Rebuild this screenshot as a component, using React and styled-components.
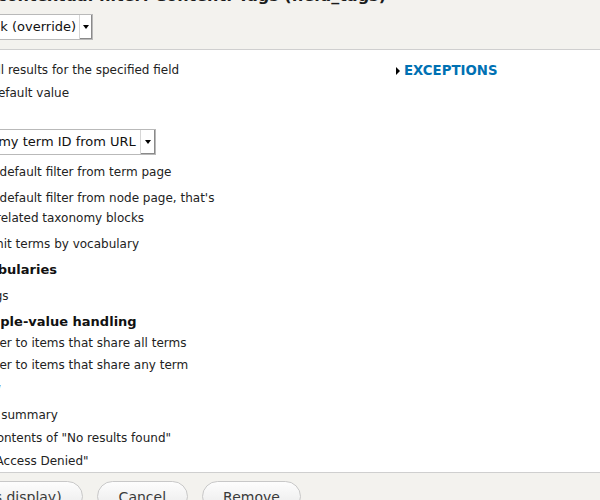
import React from "react";
import styled, { createGlobalStyle } from "styled-components";

const GlobalStyle = createGlobalStyle`
  html, body {
    margin: 0;
    padding: 0;
    background: #fff;
  }
  body {
    width: 600px;
    height: 500px;
    overflow: hidden;
    font-family: "DejaVu Sans", Verdana, sans-serif;
    font-size: 12px;
    color: #222;
  }
`;

const Dialog = styled.div`
  margin-left: -100px;
  width: 700px;
  display: flex;
  flex-direction: column;
`;

const Header = styled.div`
  height: 50px;
  box-sizing: border-box;
  background: #f3f2ee;
  border-bottom: 1px solid #cfcfcf;
  padding-left: 8px;
`;

const Title = styled.h1`
  margin: -14px 0 8px -4px;
  font-size: 16px;
  line-height: 20px;
  font-weight: bold;
  white-space: nowrap;
  color: #1c1c1c;
`;

const ForRow = styled.div`
  display: flex;
  align-items: center;
  gap: 6px;
`;

const InlineLabel = styled.label`
  font-size: 13px;
  font-weight: bold;
`;

const Select = styled.div`
  display: inline-flex;
  align-items: stretch;
  height: 26px;
  box-sizing: border-box;
  border: 1px solid #b9b9b9;
  background: #fff;
  font-size: 13px;
  color: #111;
`;

const SelectText = styled.span`
  padding: 0 ${(p) => p.$pr || 3}px 0 4px;
  line-height: 24px;
  white-space: nowrap;
`;

const SelectArrow = styled.span`
  width: ${(p) => p.$w || 12}px;
  border-left: 1px solid #d6d6d6;
  box-shadow: inset -1px -1px 0 #8a8a8a;
  display: flex;
  align-items: center;
  justify-content: center;

  &::after {
    content: "";
    border-left: 3px solid transparent;
    border-right: 3px solid transparent;
    border-top: 4px solid #000;
  }
`;

const Body = styled.div`
  height: 422px;
  box-sizing: border-box;
  overflow: hidden;
  padding: 9px 0 0 23px;
  display: grid;
  grid-template-columns: 305px 1fr;
  column-gap: 168px;
  align-items: start;
  background: #fff;
`;

const Column = styled.div`
  display: flex;
  flex-direction: column;
`;

const Sub = styled.div`
  margin-left: ${(p) => p.$indent}px;
  display: flex;
  flex-direction: column;
`;

const RadioRow = styled.div`
  line-height: ${(p) => p.$lh || 23}px;
  margin-top: ${(p) => p.$mt || 0}px;
`;

const CheckRow = styled.div`
  line-height: 20px;
  margin-top: ${(p) => (p.$mt === undefined ? 6 : p.$mt)}px;
  margin-left: ${(p) => -(p.$hang || 0)}px;
`;

const Radio = styled.span`
  display: inline-block;
  width: 13px;
  height: 13px;
  box-sizing: border-box;
  margin-right: 6px;
  vertical-align: -2px;
  border: 1px solid #8f8f8f;
  border-radius: 50%;
  background: ${(p) => (p.$on ? "radial-gradient(#333 3px, #fff 3.5px)" : "#fff")};
`;

const Check = styled.span`
  display: inline-block;
  width: 13px;
  height: 13px;
  box-sizing: border-box;
  margin-left: ${(p) => p.$hang || 0}px;
  margin-right: 6px;
  vertical-align: -2px;
  border: 1px solid #8f8f8f;
  border-radius: 2px;
  background: #fff;
`;

const FieldLabel = styled.div`
  font-size: 13px;
  font-weight: bold;
  line-height: 20px;
  margin: ${(p) => p.$m || "6px 0 0"};
  color: #111;
`;

const Toggle = styled.a`
  display: flex;
  align-items: center;
  gap: 4px;
  line-height: 23px;
  font-size: 13.3px;
  font-weight: bold;
  color: #0071b3;
  text-decoration: none;

  &::before {
    content: "";
    border-top: 4px solid transparent;
    border-bottom: 4px solid transparent;
    border-left: 4px solid #000;
  }
`;

const Footer = styled.div`
  height: 40px;
  box-sizing: border-box;
  border-top: 1px solid #cfcfcf;
  background: #f3f2ee;
  padding: 8px 0 0 5.5px;
  display: flex;
  gap: 14px;
`;

const Button = styled.button`
  font-family: "DejaVu Sans", Verdana, sans-serif;
  font-size: 14px;
  line-height: 16px;
  padding: 4px 20.5px;
  border: 1px solid #c8c8c8;
  border-radius: 20px;
  background: linear-gradient(#fdfdfd, #e9e9e9);
  color: #3a3a3a;
  white-space: nowrap;
`;

export default function App() {
  return (
    <>
      <GlobalStyle />
      <Dialog>
        <Header>
          <Title>Configure contextual filter: Content: Tags (field_tags)</Title>
          <ForRow>
            <InlineLabel>For</InlineLabel>
            <Select>
              <SelectText>This block (override)</SelectText>
              <SelectArrow />
            </Select>
          </ForRow>
        </Header>
        <Body>
          <Column>
            <RadioRow>
              <Radio />
              Display all results for the specified field
            </RadioRow>
            <RadioRow>
              <Radio $on />
              Provide default value
            </RadioRow>
            <Sub $indent={25}>
              <FieldLabel $m="3px 0 1px">Type</FieldLabel>
              <div>
                <Select>
                  <SelectText $pr={4}>Taxonomy term ID from URL</SelectText>
                  <SelectArrow $w={14} />
                </Select>
              </div>
              <CheckRow $mt={7}>
                <Check />
                Load default filter from term page
              </CheckRow>
              <CheckRow $hang={6}>
                <Check $hang={6} />
                Load default filter from node page, that's good for related taxonomy blocks
              </CheckRow>
              <Sub $indent={15}>
                <CheckRow>
                  <Check />
                  Limit terms by vocabulary
                </CheckRow>
                <FieldLabel>Vocabularies</FieldLabel>
                <CheckRow>
                  <Check />
                  Tags
                </CheckRow>
                <FieldLabel>Multiple-value handling</FieldLabel>
                <RadioRow $lh={22}>
                  <Radio $on />
                  Filter to items that share all terms
                </RadioRow>
                <RadioRow $lh={22}>
                  <Radio />
                  Filter to items that share any term
                </RadioRow>
              </Sub>
            </Sub>
            <RadioRow $mt={1}>
              <Radio />
              Hide view
            </RadioRow>
            <RadioRow $mt={4}>
              <Radio />
              Display a summary
            </RadioRow>
            <RadioRow>
              <Radio />
              Display contents of "No results found"
            </RadioRow>
            <RadioRow>
              <Radio />
              Display "Access Denied"
            </RadioRow>
          </Column>
          <Column>
            <Toggle href="#">EXCEPTIONS</Toggle>
          </Column>
        </Body>
        <Footer>
          <Button>Apply (this display)</Button>
          <Button>Cancel</Button>
          <Button>Remove</Button>
        </Footer>
      </Dialog>
    </>
  );
}
